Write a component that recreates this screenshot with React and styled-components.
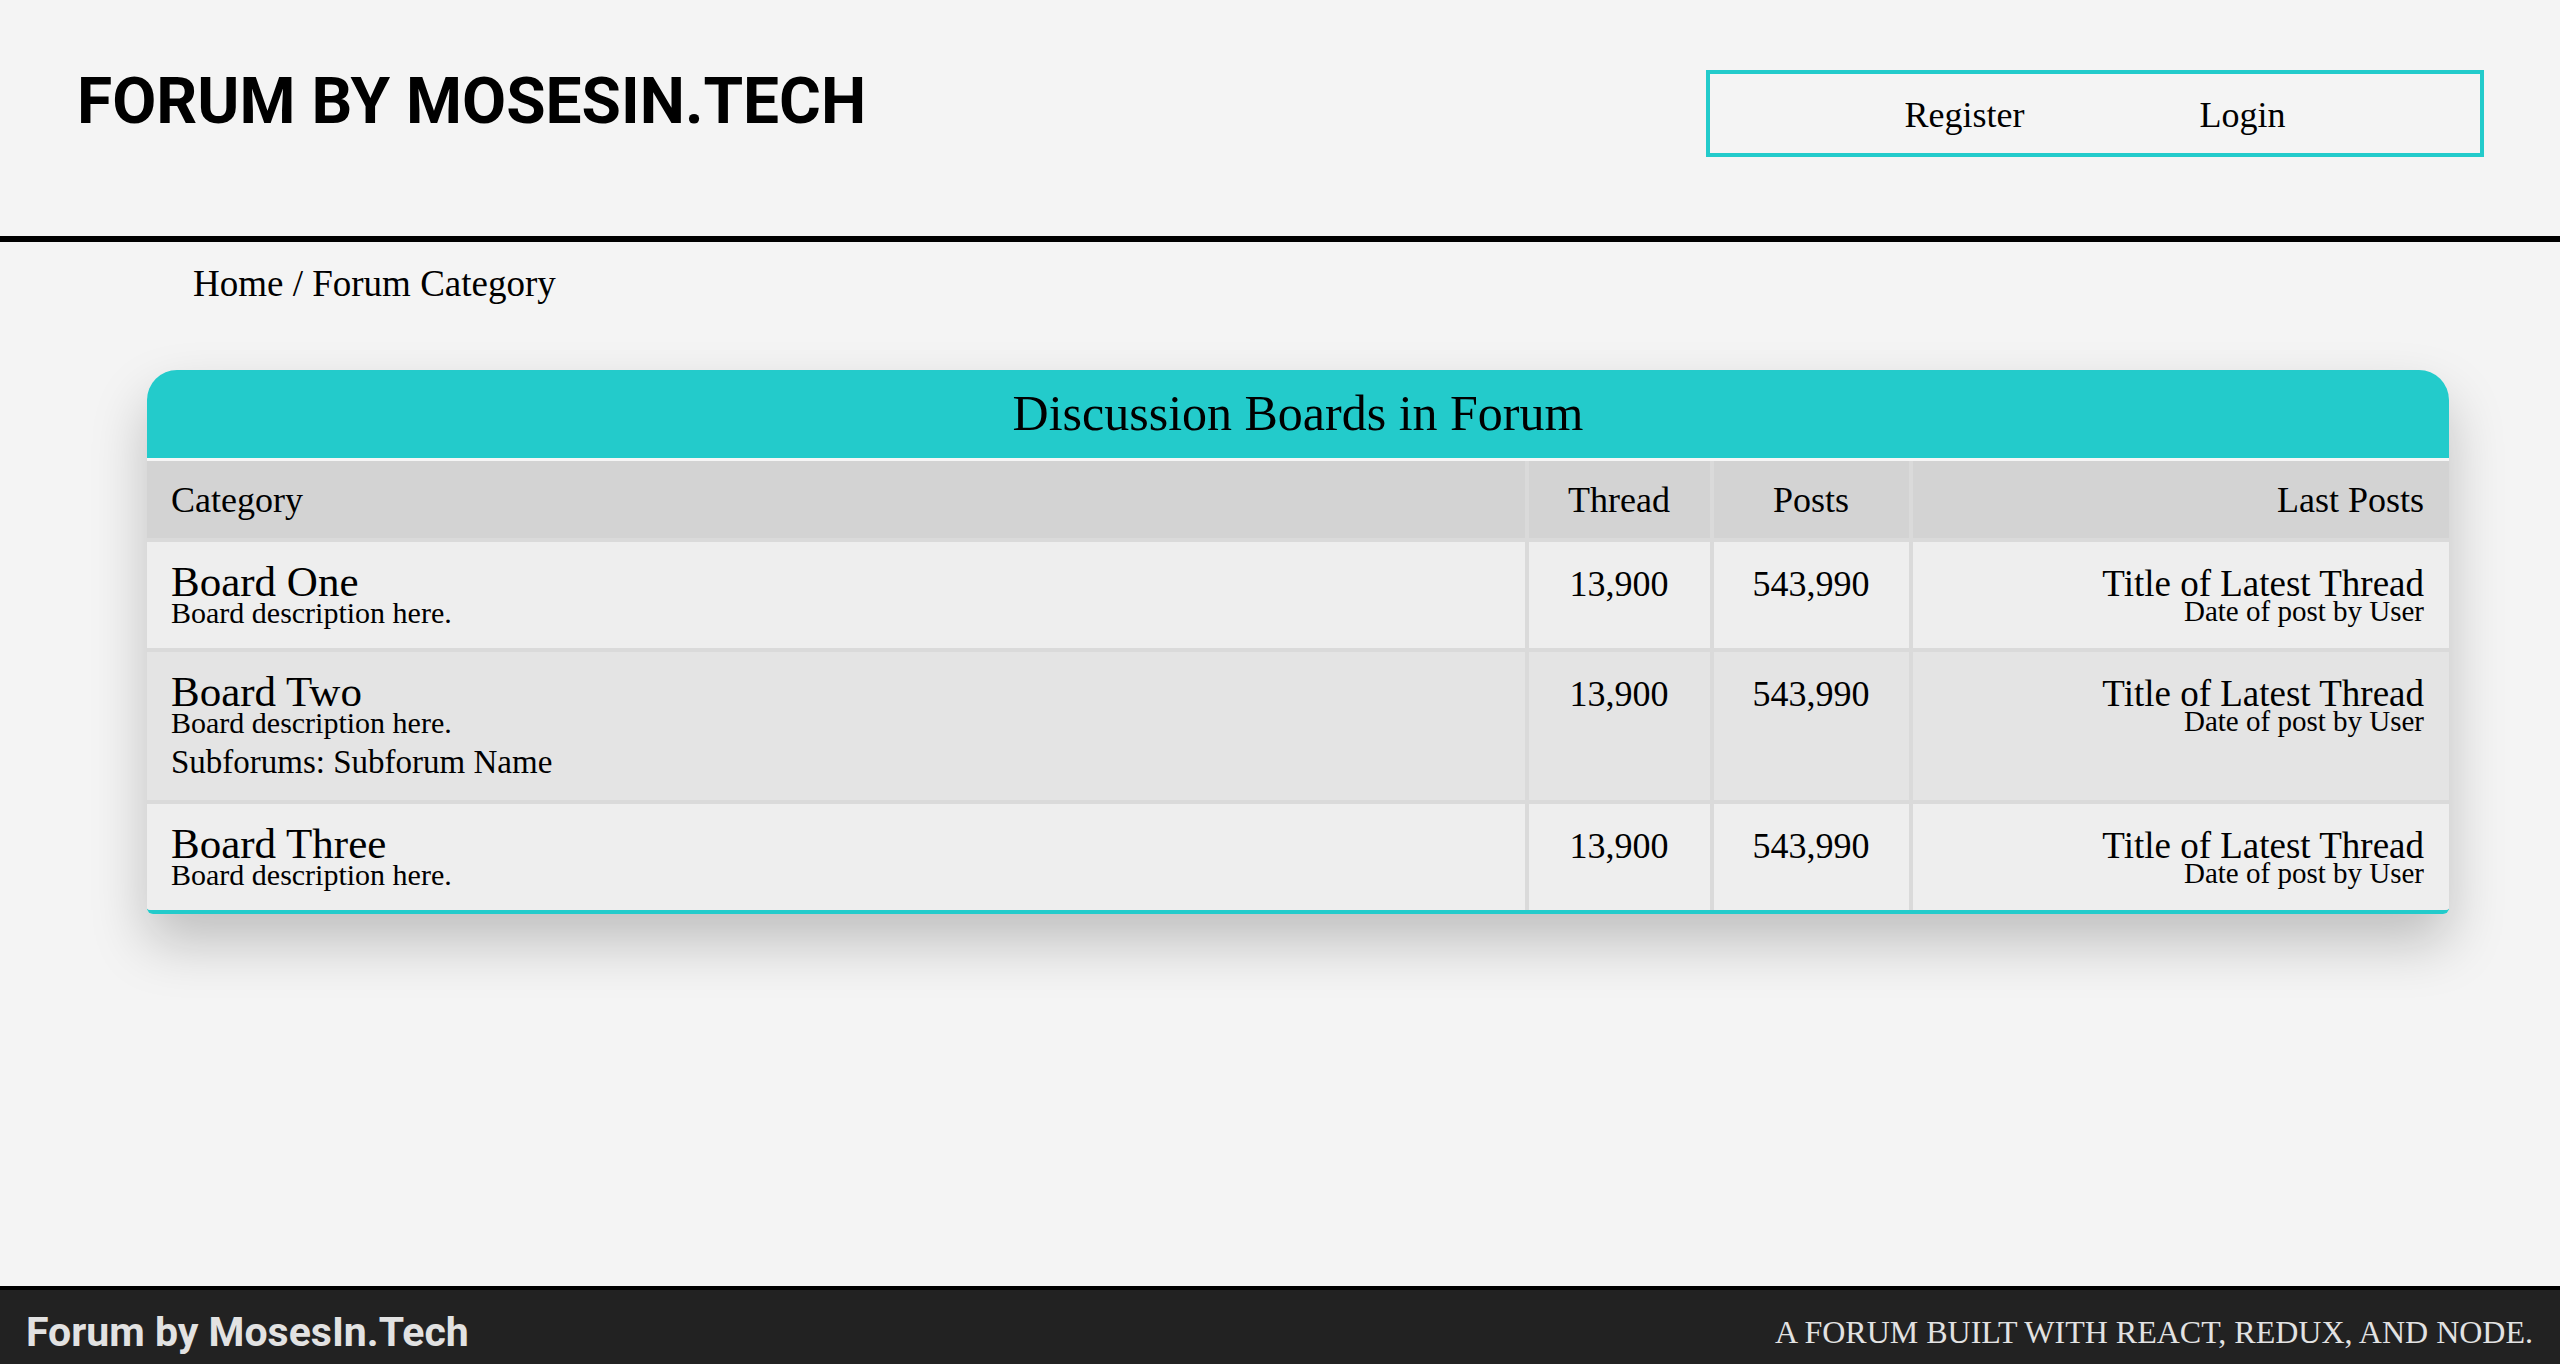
import React from "react";
import styled, { createGlobalStyle } from "styled-components";

const TEAL = "#23cbcb";

const GlobalStyle = createGlobalStyle`
  html, body { margin: 0; padding: 0; background: #f4f4f4; }
  body { font-family: "Liberation Serif", "DejaVu Serif", serif; color: #111; }
  #root { min-height: 100vh; }
`;

const Page = styled.div`
  min-height: 100vh;
  display: flex;
  flex-direction: column;
`;

const Header = styled.header`
  box-sizing: border-box;
  height: 242px;
  padding: 70px 76px 0 77px;
  display: flex;
  justify-content: space-between;
  align-items: flex-start;
  border-bottom: 6px solid #000;
`;

const SiteTitle = styled.h1`
  margin: 0;
  font-family: Roboto, "Liberation Sans", sans-serif;
  font-weight: 700;
  font-size: 64px;
  line-height: 1;
  color: #000;
`;

const Nav = styled.nav`
  box-sizing: border-box;
  width: 778px;
  height: 87px;
  padding-top: 3px;
  border: 4px solid ${TEAL};
  display: flex;
  justify-content: center;
  align-items: center;
  gap: 175px;
`;

const NavLink = styled.a`
  font-size: 36px;
  line-height: 36px;
  color: #000;
  text-decoration: none;
`;

const Main = styled.main`
  flex: 1;
  display: flex;
  flex-direction: column;
`;

const Breadcrumb = styled.div`
  margin: 24px 0 0 193px;
  font-size: 37px;
  line-height: 36px;
  color: #000;
`;

const Card = styled.section`
  margin: 68px 111px 0 147px;
  border-radius: 30px 30px 6px 6px;
  overflow: hidden;
  border-bottom: 4px solid ${TEAL};
  box-shadow: 0 28px 56px rgba(0, 0, 0, 0.22);
`;

const TitleBar = styled.h2`
  margin: 0;
  background: ${TEAL};
  padding: 18px 0 20px;
  text-align: center;
  font-weight: 400;
  font-size: 50px;
  line-height: 50px;
  color: #000;
  border-bottom: 3px solid #f6f6f6;
`;

const Table = styled.div`
  display: flex;
  flex-direction: column;
  gap: 4px;
  background: #dadada;
`;

const Row = styled.div`
  display: grid;
  grid-template-columns: 1378px 181px 195px 1fr;
  column-gap: 4px;
  background: #dadada;
`;

const Cell = styled.div`
  box-sizing: border-box;
  background: ${(p) => p.$bg};
  padding: ${(p) => (p.$head ? "21px 25px 20px 24px" : `${p.$top || 24}px 25px 20px 24px`)};
  text-align: ${(p) => p.$align || "left"};
  color: #000;
`;

const HeadLabel = styled.span`
  display: block;
  font-size: 36px;
  line-height: 36px;
`;

const BoardName = styled.div`
  font-size: 43px;
  line-height: 32px;
`;

const BoardDesc = styled.div`
  font-size: 30px;
  line-height: 30px;
`;

const Subforums = styled.div`
  margin-top: 6px;
  font-size: 33px;
  line-height: 36px;
`;

const Count = styled.div`
  font-size: 36px;
  line-height: 36px;
`;

const LastTitle = styled.div`
  font-size: 37px;
  line-height: 30px;
`;

const LastMeta = styled.div`
  font-size: 29px;
  line-height: 24px;
`;

const Footer = styled.footer`
  box-sizing: border-box;
  height: 78px;
  padding: 10px 27px 0 26px;
  background: #222;
  border-top: 4px solid #000;
  display: flex;
  align-items: center;
  justify-content: space-between;
  color: #e2e2e2;
`;

const FooterBrand = styled.div`
  font-family: Roboto, "Liberation Sans", sans-serif;
  font-weight: 700;
  font-size: 41px;
  line-height: 1;
`;

const FooterTag = styled.div`
  font-size: 32px;
  line-height: 1;
  text-transform: uppercase;
`;

const boards = [
  { name: "Board One", desc: "Board description here.", bg: "#eeeeee" },
  {
    name: "Board Two",
    desc: "Board description here.",
    sub: "Subforums: Subforum Name",
    bg: "#e4e4e4",
  },
  { name: "Board Three", desc: "Board description here.", bg: "#eeeeee" },
];

export default function App() {
  return (
    <Page>
      <GlobalStyle />
      <Header>
        <SiteTitle>FORUM BY MOSESIN.TECH</SiteTitle>
        <Nav>
          <NavLink href="#">Register</NavLink>
          <NavLink href="#">Login</NavLink>
        </Nav>
      </Header>
      <Main>
        <Breadcrumb>Home / Forum Category</Breadcrumb>
        <Card>
          <TitleBar>Discussion Boards in Forum</TitleBar>
          <Table>
            <Row>
              <Cell $head $bg="#d3d3d3">
                <HeadLabel>Category</HeadLabel>
              </Cell>
              <Cell $head $bg="#d3d3d3" $align="center">
                <HeadLabel>Thread</HeadLabel>
              </Cell>
              <Cell $head $bg="#d3d3d3" $align="center">
                <HeadLabel>Posts</HeadLabel>
              </Cell>
              <Cell $head $bg="#d3d3d3" $align="right">
                <HeadLabel>Last Posts</HeadLabel>
              </Cell>
            </Row>
            {boards.map((b) => (
              <Row key={b.name}>
                <Cell $bg={b.bg}>
                  <BoardName>{b.name}</BoardName>
                  <BoardDesc>{b.desc}</BoardDesc>
                  {b.sub && <Subforums>{b.sub}</Subforums>}
                </Cell>
                <Cell $bg={b.bg} $align="center">
                  <Count>13,900</Count>
                </Cell>
                <Cell $bg={b.bg} $align="center">
                  <Count>543,990</Count>
                </Cell>
                <Cell $bg={b.bg} $align="right" $top={27}>
                  <LastTitle>Title of Latest Thread</LastTitle>
                  <LastMeta>Date of post by User</LastMeta>
                </Cell>
              </Row>
            ))}
          </Table>
        </Card>
      </Main>
      <Footer>
        <FooterBrand>Forum by MosesIn.Tech</FooterBrand>
        <FooterTag>A forum built with React, Redux, and Node.</FooterTag>
      </Footer>
    </Page>
  );
}
